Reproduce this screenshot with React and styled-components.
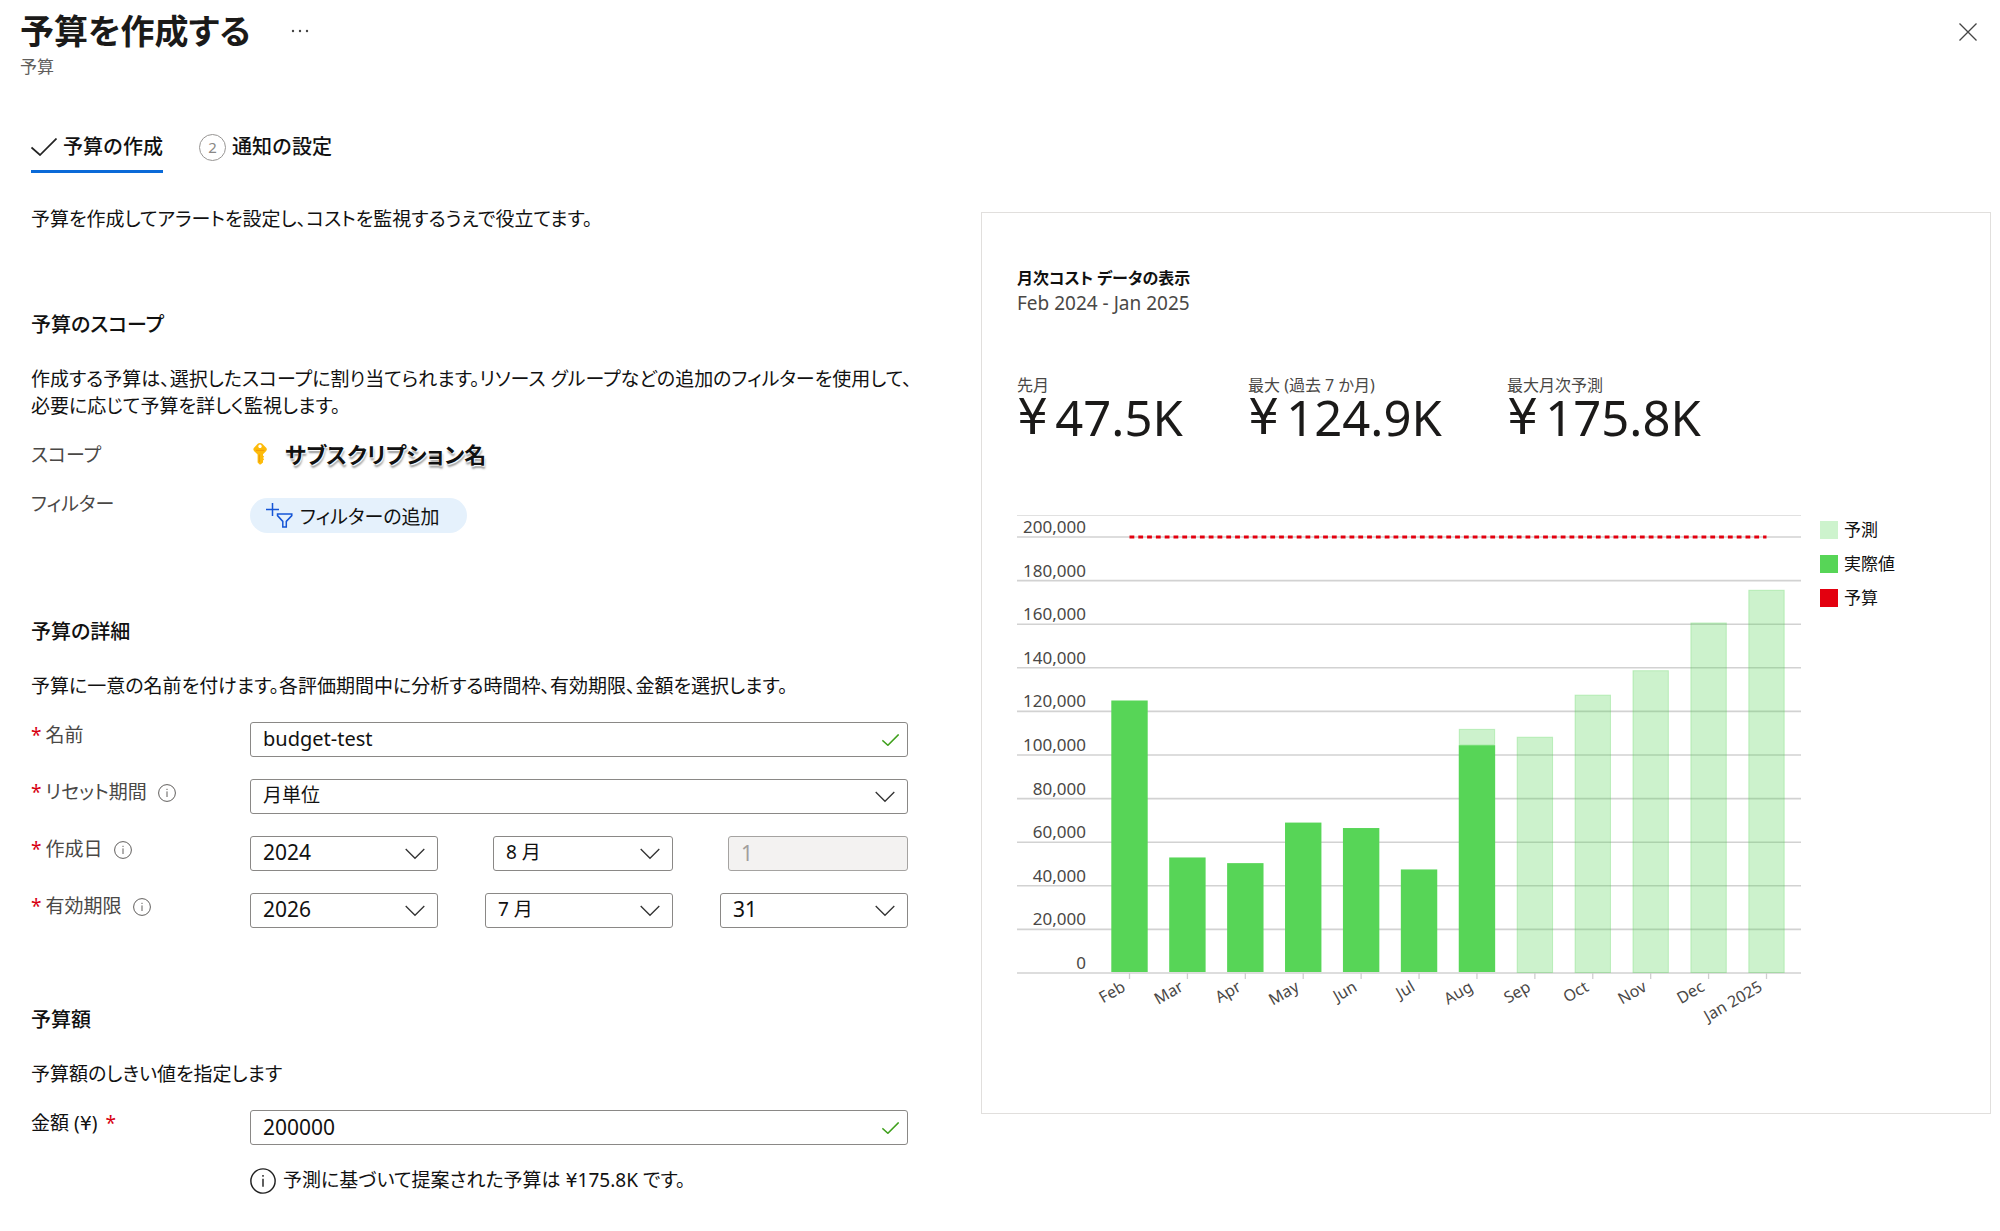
import React, { useState } from "react";
import styled, { createGlobalStyle } from "styled-components";

const GlobalStyle = createGlobalStyle`
  *, *::before, *::after { box-sizing: border-box; }
  body { margin: 0; background: #fff; }
  body, button, input, select {
    font-family: "Noto Sans", "Noto Sans CJK JP", sans-serif;
    font-feature-settings: "palt";
    color: #111;
  }
`;

const Page = styled.div`
  font-size: 19px;
  line-height: 27px;
  padding-bottom: 36px;
`;

const Header = styled.header`
  display: flex;
  justify-content: space-between;
  align-items: flex-start;
  padding: 8px 23px 0 20px;
`;

const TitleRow = styled.div`
  display: flex;
  align-items: center;
  gap: 36px;
`;

const Title = styled.h1`
  margin: 0;
  font-size: 34px;
  line-height: 46px;
  font-weight: 700;
  color: #1b1a19;
`;

const Subtitle = styled.p`
  margin: 0;
  font-size: 17px;
  line-height: 26px;
  color: #605e5c;
`;

const IconButton = styled.button`
  display: flex;
  align-items: center;
  justify-content: center;
  padding: 4px;
  border: 0;
  background: none;
`;

const CloseButton = styled(IconButton)`
  margin-top: 15px;
  padding: 0;
`;

const Tabs = styled.nav`
  display: flex;
  gap: 36px;
  padding: 53px 31px 0;
`;

const Tab = styled.button`
  display: flex;
  align-items: center;
  gap: 6px;
  padding: 0 0 9px;
  border: 0;
  border-bottom: 3px solid ${(p) => (p.$active ? "#0a6ad8" : "transparent")};
  background: none;
  font-size: 20px;
  line-height: 28px;
  font-weight: 500;
  font-feature-settings: normal;
`;

const StepNumber = styled.span`
  width: 27px;
  height: 27px;
  border: 1px solid #979593;
  border-radius: 50%;
  font-size: 15px;
  line-height: 25px;
  font-weight: 400;
  color: #8a8886;
  text-align: center;
`;

const Body = styled.main`
  display: flex;
  align-items: flex-start;
  gap: 57px;
  padding: 33px 9px 0 31px;
`;

const Form = styled.form`
  flex: 0 1 893px;
  min-width: 0;
`;

const Text = styled.p`
  margin: 0;
`;

const Section = styled.section`
  margin-top: 78px;
`;

const Heading = styled.h2`
  margin: 0 0 27px;
  font-size: 20px;
  line-height: 28px;
  font-weight: 500;
`;

const Rows = styled.div`
  display: flex;
  flex-direction: column;
  gap: 22px;
  max-width: 877px;
  margin-top: 22px;
`;

const Row = styled.div`
  display: grid;
  grid-template-columns: 219px minmax(0, 1fr);
  align-items: start;
`;

const Label = styled.label`
  display: flex;
  align-items: center;
  gap: ${(p) => (p.$strong ? 8 : 4)}px;
  color: ${(p) => (p.$strong ? "#111" : "#4a4846")};
`;

const Required = styled.span`
  color: #d80012;
`;

const InfoSlot = styled.span`
  display: flex;
  margin-left: 7px;
`;

const ScopeValue = styled.div`
  display: flex;
  align-items: center;
  gap: 15px;
  padding-left: 1px;
  font-size: 22px;
  line-height: 18px;
  font-weight: 700;
  text-shadow: 0 0 1px #fff, 1px 1px 1px #fff, 1px 3px 2px #999;
`;

const FilterButton = styled.button`
  justify-self: start;
  display: flex;
  align-items: center;
  gap: 7px;
  height: 35px;
  margin: 7px 0;
  padding: 0 27px 0 16px;
  border: 0;
  border-radius: 18px;
  background: #e5f1fc;
  font-size: 19px;
`;

const Field = styled.div`
  position: relative;
  min-width: 0;
`;

const control = `
  display: block;
  width: 100%;
  height: 35px;
  padding: 0 40px 2px 12px;
  border: 1px solid #8a8886;
  border-radius: 3px;
  background: #fff;
  line-height: 27px;
`;

const Input = styled.input`
  ${control}
  font-size: ${(p) => (p.$numeric ? 21 : 20)}px;
  &:disabled {
    border-color: #a5a3a1;
    background: #f3f2f1;
    color: #a19f9d;
  }
`;

const Select = styled.select`
  ${control}
  appearance: none;
  font-size: ${(p) => (p.$numeric ? 21 : 19)}px;
`;

const FieldIcon = styled.span`
  position: absolute;
  top: 0;
  bottom: 0;
  right: ${(p) => p.$inset}px;
  display: flex;
  align-items: center;
  pointer-events: none;
`;

const DateFields = styled.div`
  display: grid;
  grid-template-columns: ${(p) => (p.$wideFirst ? "188fr 180fr 180fr" : "repeat(3, 1fr)")};
  gap: ${(p) => (p.$wideFirst ? 55 : 47)}px;
`;

const Hint = styled.div`
  grid-column: 2;
  display: flex;
  align-items: center;
  gap: 7px;
`;

const Panel = styled.aside`
  flex: 1;
  min-width: 0;
  margin-top: 6px;
  padding: 53px 35px 78px;
  border: 1px solid #e1dfdd;
`;

const PanelTitle = styled.h3`
  margin: 0;
  font-size: 16px;
  line-height: 24px;
  font-weight: 700;
`;

const Period = styled.p`
  margin: 0;
  font-size: 19px;
  line-height: 26px;
  color: #4a4846;
`;

const Stats = styled.dl`
  display: grid;
  grid-template-columns: 231px 259px 1fr;
  margin: 58px 0 76px;
`;

const StatLabel = styled.dt`
  font-size: 16px;
  line-height: 22px;
  color: #4a4846;
`;

const StatValue = styled.dd`
  display: flex;
  gap: 7px;
  margin: 0;
  font-size: 49px;
  line-height: 43px;
  color: #1b1a19;
`;

const Yen = styled.span`
  font-family: "DejaVu Sans", sans-serif;
`;

const ChartRow = styled.div`
  display: flex;
  align-items: flex-start;
  gap: 19px;
`;

const ChartSvg = styled.svg`
  flex: 1;
  min-width: 0;
  max-width: 784px;
  height: auto;
  overflow: visible;
  fill: #4a4846;
`;

const Legend = styled.ul`
  display: flex;
  flex-direction: column;
  gap: 10px;
  margin: 0;
  padding: 3px 0 0;
  list-style: none;
`;

const LegendItem = styled.li`
  display: flex;
  align-items: center;
  gap: 6px;
  font-size: 17px;
  line-height: 24px;
`;

const Swatch = styled.span`
  width: 18px;
  height: 18px;
  background: ${(p) => p.$color};
`;

const GREEN = "#57d557";
const PALE = "#cdf3cd";
const RED = "#e3000f";

function CheckIcon({ width, height, color, stroke = 1.7 }) {
  return (
    <svg width={width} height={height} viewBox="0 0 26 18" fill="none" stroke={color} strokeWidth={stroke} aria-hidden="true">
      <path d="M0.5 9.5 L9 17 L25.5 0.5" />
    </svg>
  );
}

function Chevron() {
  return (
    <svg width="20" height="12" viewBox="0 0 20 12" fill="none" stroke="#333" strokeWidth="1.3" aria-hidden="true">
      <path d="M0.7 1 L10 10.3 L19.3 1" />
    </svg>
  );
}

function InfoIcon({ size, color = "#605e5c" }) {
  return (
    <svg width={size} height={size} viewBox="0 0 18 18" fill="none" stroke={color} strokeWidth="1" aria-hidden="true">
      <circle cx="9" cy="9" r="8.4" />
      <path d="M9 7.4 V13 M9 4.8 V6" />
    </svg>
  );
}

function KeyIcon() {
  return (
    <svg width="19" height="23" viewBox="0 0 19 23" aria-hidden="true">
      <path
        fillRule="evenodd"
        fill="#fdbb0a"
        d="M7 1.6 Q9 0.2 11 1.6 L15.4 6 Q16.4 7.4 15.2 9 L12 12.2 V13.6 L13.2 14.8 L12 16 L13.2 17.2 L12 18.6 V20.4 L9.6 22.6 H8.6 L6.6 20.6 V12.4 L3 9 Q1.8 7.4 2.8 6 Z M9 2.6 A1.7 1.7 0 1 0 9.02 2.6 Z"
      />
      <path d="M4.8 8.4 H13.4" stroke="#f39a06" strokeWidth="1" />
      <path d="M8.3 12.5 V20" stroke="#e89a0c" strokeWidth="1" />
    </svg>
  );
}

function FilterIcon() {
  return (
    <svg width="27" height="25" viewBox="0 0 27 25" fill="none" stroke="#1555d6" strokeWidth="1.5" aria-hidden="true">
      <path d="M6.5 0 V13 M0 6.5 H13" />
      <path d="M11.5 11 H25.8 V12.6 L20.3 18.4 V24 H16.8 V18.4 L11.5 12.6 Z" />
    </svg>
  );
}

function CloseIcon() {
  return (
    <svg width="18" height="18" viewBox="0 0 18 18" stroke="#444" strokeWidth="1.3" aria-hidden="true">
      <path d="M0.5 0.5 L17.5 17.5 M17.5 0.5 L0.5 17.5" />
    </svg>
  );
}

function MoreIcon() {
  return (
    <svg width="18" height="4" viewBox="0 0 18 4" fill="#444" aria-hidden="true">
      <circle cx="2" cy="2" r="1.2" />
      <circle cx="9" cy="2" r="1.2" />
      <circle cx="16" cy="2" r="1.2" />
    </svg>
  );
}

const months = [
  { name: "Feb", actual: 125000 },
  { name: "Mar", actual: 53000 },
  { name: "Apr", actual: 50400 },
  { name: "May", actual: 69000 },
  { name: "Jun", actual: 66500 },
  { name: "Jul", actual: 47500 },
  { name: "Aug", actual: 104500, forecast: 112000 },
  { name: "Sep", forecast: 108400 },
  { name: "Oct", forecast: 127700 },
  { name: "Nov", forecast: 138900 },
  { name: "Dec", forecast: 160800 },
  { name: "Jan 2025", forecast: 175800 },
];

const BASE = 458;
const toY = (v) => BASE - (v * 436) / 200000;
const toX = (i) => 112.5 + (i * 637) / 11;

function CostChart() {
  const ticks = Array.from({ length: 11 }, (_, i) => i * 20000);
  return (
    <ChartSvg width="784" height="520" viewBox="0 0 784 520" role="img" aria-label="月次コスト">
      <path d="M0 0.5 H784" stroke="#e1e1e1" />
      {ticks.map((t) => (
        <g key={t}>
          <path d={`M0 ${toY(t)} H784`} stroke="#d2d2d2" strokeWidth="1.6" />
          <text x="69" y={toY(t) - 4} fontSize="17" textAnchor="end">
            {t.toLocaleString("en-US")}
          </text>
        </g>
      ))}
      {months.map((m, i) => {
        const x = toX(i);
        const actual = m.actual || 0;
        return (
          <g key={m.name}>
            {m.forecast && (
              <rect
                x={x - 17.7}
                y={toY(m.forecast) + 0.5}
                width="35.4"
                height={toY(actual) - toY(m.forecast) - 1}
                fill={GREEN}
                fillOpacity="0.3"
                stroke={GREEN}
                strokeOpacity="0.3"
              />
            )}
            {m.actual && <rect x={x - 18.2} y={toY(actual)} width="36.4" height={BASE - toY(actual) - 1} fill={GREEN} />}
            <path d={`M${x} ${BASE} v6`} stroke="#cfcfcf" strokeWidth="1.3" />
            <text x={x - 3} y={BASE + 17} fontSize="16" textAnchor="end" transform={`rotate(-30 ${x - 3} ${BASE + 17})`}>
              {m.name}
            </text>
          </g>
        );
      })}
      <path d={`M${toX(0)} ${toY(200000)} H${toX(11)}`} stroke={RED} strokeWidth="3" strokeDasharray="4.8 4" />
    </ChartSvg>
  );
}

function TextField({ id, defaultValue, numeric }) {
  const [value, setValue] = useState(defaultValue);
  return (
    <Field>
      <Input id={id} type="text" value={value} $numeric={numeric} onChange={(e) => setValue(e.target.value)} />
      <FieldIcon $inset={9}>
        <CheckIcon width={17} height={12} color="#3fa01c" stroke={2.4} />
      </FieldIcon>
    </Field>
  );
}

function SelectField({ id, label, value, numeric }) {
  return (
    <Field>
      <Select id={id} aria-label={label} defaultValue={value} $numeric={numeric}>
        <option value={value}>{value}</option>
      </Select>
      <FieldIcon $inset={13}>
        <Chevron />
      </FieldIcon>
    </Field>
  );
}

function FieldLabel({ htmlFor, children, info }) {
  return (
    <Label htmlFor={htmlFor}>
      <Required>*</Required>
      {children}
      {info && (
        <InfoSlot>
          <InfoIcon size={18} />
        </InfoSlot>
      )}
    </Label>
  );
}

function Stat({ label, amount }) {
  return (
    <div>
      <StatLabel>{label}</StatLabel>
      <StatValue>
        <Yen>¥</Yen>
        {amount}
      </StatValue>
    </div>
  );
}

export default function App() {
  return (
    <Page lang="ja">
      <GlobalStyle />
      <Header>
        <div>
          <TitleRow>
            <Title>予算を作成する</Title>
            <IconButton type="button" aria-label="その他">
              <MoreIcon />
            </IconButton>
          </TitleRow>
          <Subtitle>予算</Subtitle>
        </div>
        <CloseButton type="button" aria-label="閉じる">
          <CloseIcon />
        </CloseButton>
      </Header>

      <Tabs>
        <Tab type="button" $active>
          <CheckIcon width={26} height={18} color="#222" />
          予算の作成
        </Tab>
        <Tab type="button">
          <StepNumber>2</StepNumber>
          通知の設定
        </Tab>
      </Tabs>

      <Body>
        <Form onSubmit={(e) => e.preventDefault()}>
          <Text>予算を作成してアラートを設定し、コストを監視するうえで役立てます。</Text>

          <Section>
            <Heading>予算のスコープ</Heading>
            <Text>
              作成する予算は、選択したスコープに割り当てられます。リソース グループなどの追加のフィルターを使用して、
              <br />
              必要に応じて予算を詳しく監視します。
            </Text>
            <Rows>
              <Row>
                <Label as="span">スコープ</Label>
                <ScopeValue>
                  <KeyIcon />
                  サブスクリプション名
                </ScopeValue>
              </Row>
              <Row>
                <Label as="span">フィルター</Label>
                <FilterButton type="button">
                  <FilterIcon />
                  フィルターの追加
                </FilterButton>
              </Row>
            </Rows>
          </Section>

          <Section>
            <Heading>予算の詳細</Heading>
            <Text>予算に一意の名前を付けます。各評価期間中に分析する時間枠、有効期限、金額を選択します。</Text>
            <Rows>
              <Row>
                <FieldLabel htmlFor="name">名前</FieldLabel>
                <TextField id="name" defaultValue="budget-test" />
              </Row>
              <Row>
                <FieldLabel htmlFor="period" info>
                  リセット期間
                </FieldLabel>
                <SelectField id="period" value="月単位" />
              </Row>
              <Row>
                <FieldLabel htmlFor="start-year" info>
                  作成日
                </FieldLabel>
                <DateFields $wideFirst>
                  <SelectField id="start-year" value="2024" numeric />
                  <SelectField label="作成月" value="8 月" />
                  <Input aria-label="作成日の日" defaultValue="1" disabled $numeric />
                </DateFields>
              </Row>
              <Row>
                <FieldLabel htmlFor="end-year" info>
                  有効期限
                </FieldLabel>
                <DateFields>
                  <SelectField id="end-year" value="2026" numeric />
                  <SelectField label="有効期限の月" value="7 月" />
                  <SelectField label="有効期限の日" value="31" numeric />
                </DateFields>
              </Row>
            </Rows>
          </Section>

          <Section>
            <Heading>予算額</Heading>
            <Text>予算額のしきい値を指定します</Text>
            <Rows>
              <Row>
                <Label htmlFor="amount" $strong>
                  <span>
                    金額 (<Yen>¥</Yen>)
                  </span>
                  <Required>*</Required>
                </Label>
                <TextField id="amount" defaultValue="200000" numeric />
              </Row>
              <Row>
                <Hint>
                  <InfoIcon size={26} color="#222" />
                  <span>
                    予測に基づいて提案された予算は <Yen>¥</Yen>175.8K です。
                  </span>
                </Hint>
              </Row>
            </Rows>
          </Section>
        </Form>

        <Panel>
          <PanelTitle>月次コスト データの表示</PanelTitle>
          <Period>Feb 2024 - Jan 2025</Period>
          <Stats>
            <Stat label="先月" amount="47.5K" />
            <Stat label="最大 (過去 7 か月)" amount="124.9K" />
            <Stat label="最大月次予測" amount="175.8K" />
          </Stats>
          <ChartRow>
            <CostChart />
            <Legend>
              <LegendItem>
                <Swatch $color={PALE} />
                予測
              </LegendItem>
              <LegendItem>
                <Swatch $color={GREEN} />
                実際値
              </LegendItem>
              <LegendItem>
                <Swatch $color={RED} />
                予算
              </LegendItem>
            </Legend>
          </ChartRow>
        </Panel>
      </Body>
    </Page>
  );
}
